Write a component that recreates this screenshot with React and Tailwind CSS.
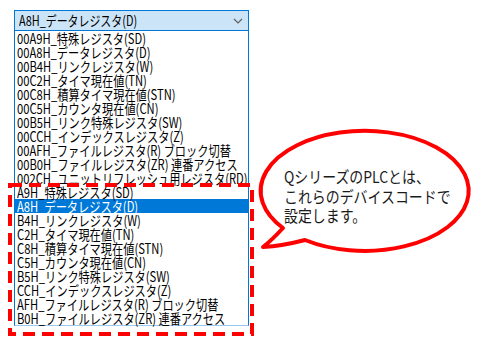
const upperRows = [
  "00A9H_特殊レジスタ(SD)",
  "00A8H_データレジスタ(D)",
  "00B4H_リンクレジスタ(W)",
  "00C2H_タイマ現在値(TN)",
  "00C8H_積算タイマ現在値(STN)",
  "00C5H_カウンタ現在値(CN)",
  "00B5H_リンク特殊レジスタ(SW)",
  "00CCH_インデックスレジスタ(Z)",
  "00AFH_ファイルレジスタ(R) ブロック切替",
  "00B0H_ファイルレジスタ(ZR) 連番アクセス",
  "002CH_ユニットリフレッシュ用レジスタ(RD)",
];

const lowerRows = [
  "A9H_特殊レジスタ(SD)",
  "A8H_データレジスタ(D)",
  "B4H_リンクレジスタ(W)",
  "C2H_タイマ現在値(TN)",
  "C8H_積算タイマ現在値(STN)",
  "C5H_カウンタ現在値(CN)",
  "B5H_リンク特殊レジスタ(SW)",
  "CCH_インデックスレジスタ(Z)",
  "AFH_ファイルレジスタ(R) ブロック切替",
  "B0H_ファイルレジスタ(ZR) 連番アクセス",
];

const font = { fontFamily: '"Noto Sans CJK JP", "Noto Sans", sans-serif' };

const Row = ({ text, selected }) => (
  <div
    className={`h-[14px] pl-[2px] leading-[14px] text-[14px] whitespace-nowrap overflow-x-clip ${
      selected ? "bg-[#0078d7] text-white" : "text-black"
    }`}
  >
    <span className="inline-block origin-left scale-x-[0.8]">{text}</span>
  </div>
);

const App = () => {
  return (
    <div className="relative w-[480px] h-[350px] bg-white overflow-hidden" style={font}>
      {/* Combo box with open list */}
      <div className="ml-[14px] pt-[10px] w-[235px]">
        <div className="h-[21px] border border-[#0078d7] bg-[#cce4f7] flex items-center justify-between pl-[4px] pr-[5px]">
          <span className="inline-block origin-left scale-x-[0.78] text-[14px] leading-[19px] text-black whitespace-nowrap">
            A8H_データレジスタ(D)
          </span>
          <svg width="10" height="6" viewBox="0 0 10 6" className="shrink-0">
            <path d="M1 1 L5 5 L9 1" fill="none" stroke="#606060" strokeWidth="1.2" />
          </svg>
        </div>
        <div className="border-l border-r border-l-[#0078d7] border-r-[#0078d7] border-b border-b-[#99c9ef] bg-white">
          {upperRows.map((t) => (
            <Row key={t} text={t} />
          ))}
          {lowerRows.map((t, i) => (
            <Row key={t} text={t} selected={i === 1} />
          ))}
        </div>
      </div>

      {/* red dashed highlight + speech bubble */}
      <svg className="absolute left-0 top-0" width="480" height="350">
        <rect x="10" y="185" width="242" height="149" fill="none" stroke="#ff0000" strokeWidth="4" strokeDasharray="12 7" />
        <path
          d="M283 228 Q272 240 263 247 Q282 246 305 240 A104 60 0 1 0 283 228 Z"
          fill="#ffffff"
          stroke="#ff0000"
          strokeWidth="4"
          strokeLinejoin="round"
        />
      </svg>

      {/* bubble text */}
      <div className="absolute left-[284px] top-[167px] text-[16px] leading-[19.5px] text-[#1a1a1a] whitespace-nowrap">
        <div className="origin-left scale-x-[0.87]">QシリーズのPLCとは、</div>
        <div className="origin-left scale-x-[0.87]">これらのデバイスコードで</div>
        <div className="origin-left scale-x-[0.87]">設定します。</div>
      </div>
    </div>
  );
};

export default App;
